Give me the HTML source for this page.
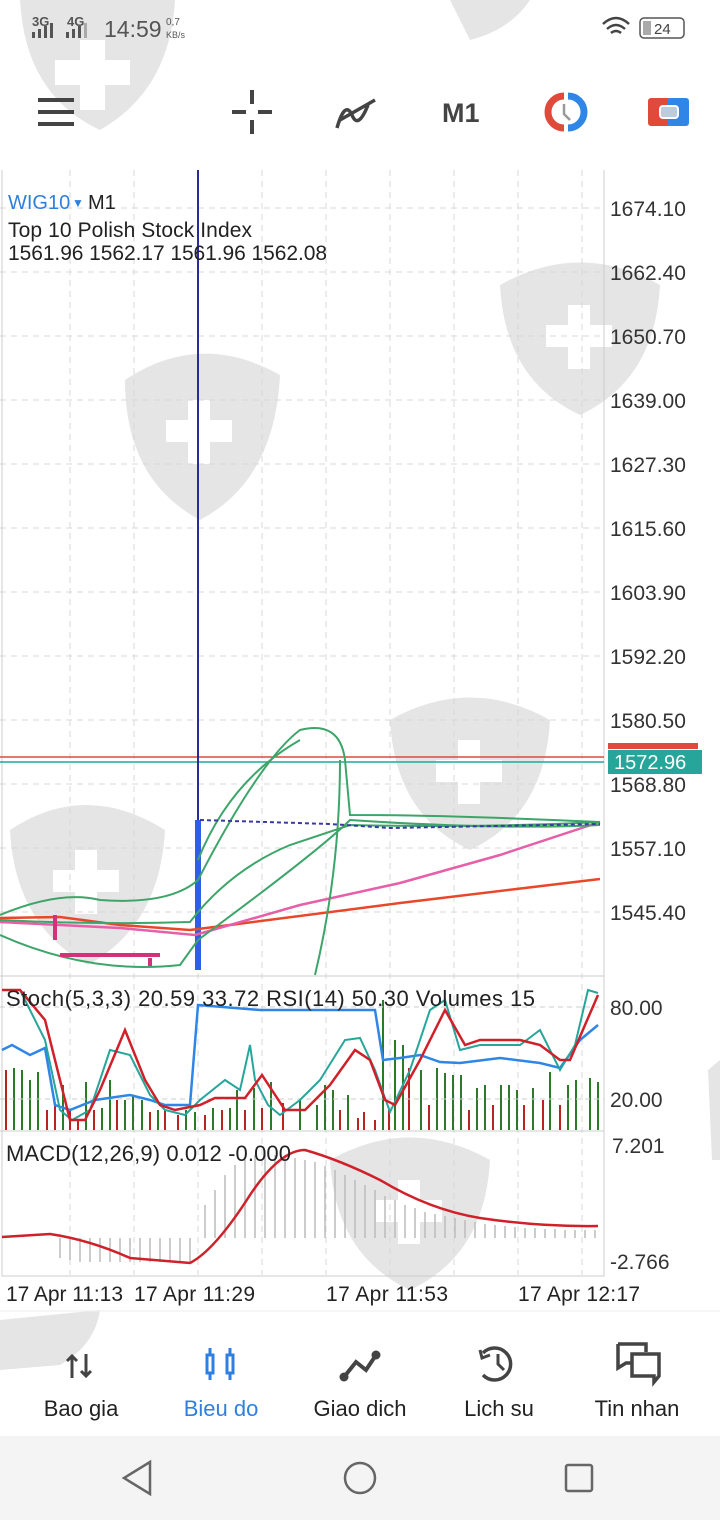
<!DOCTYPE html>
<html><head><meta charset="utf-8"><style>
body{margin:0;width:720px;height:1520px;background:#fff;position:relative;overflow:hidden;font-family:"Liberation Sans",sans-serif;}
.abs{position:absolute}
</style></head><body>
<svg class="abs" style="left:0;top:0" width="720" height="1520" viewBox="0 0 720 1520">
<g fill="#e5e5e5">
<path d="M20 0 L175 0 Q170 90 100 130 Q25 95 20 0Z"/>
<path d="M125 380 Q200 330 280 375 Q275 480 200 520 Q125 480 125 380Z"/>
<path d="M500 285 Q580 240 660 285 Q655 380 580 415 Q505 380 500 285Z"/>
<path d="M390 720 Q470 675 550 720 Q545 815 470 850 Q395 815 390 720Z"/>
<path d="M10 830 Q85 780 165 830 Q160 925 88 965 Q15 925 10 830Z"/>
<path d="M330 1160 Q410 1115 490 1160 Q485 1255 410 1290 Q335 1255 330 1160Z"/>
<path d="M0 1320 L100 1310 Q95 1345 60 1365 L0 1370Z"/>
<path d="M640 1480 L720 1460 L720 1520 L650 1520Z"/>
<path d="M708 1070 L720 1060 L720 1160 L712 1160Z"/>
<path d="M450 0 L530 0 Q510 30 470 40Z"/>
</g>
<g fill="#fff">
<path d="M80 40h25v20h25v25h-25v25h-25v-25h-25v-25h25z"/>
<path d="M188 400h22v20h22v22h-22v22h-22v-22h-22v-22h22z"/>
<path d="M568 305h22v20h22v22h-22v22h-22v-22h-22v-22h22z"/>
<path d="M458 740h22v20h22v22h-22v22h-22v-22h-22v-22h22z"/>
<path d="M75 850h22v20h22v22h-22v22h-22v-22h-22v-22h22z"/>
<path d="M398 1180h22v20h22v22h-22v22h-22v-22h-22v-22h22z"/>
</g>
<text x="32" y="26" font-size="13" fill="#555" font-weight="bold">3G</text>
<text x="67" y="26" font-size="13" fill="#555" font-weight="bold">4G</text>
<g fill="#555"><rect x="32" y="32" width="3" height="6"/><rect x="38" y="29" width="3" height="9"/><rect x="44" y="26" width="3" height="12"/><rect x="50" y="23" width="3" height="15"/><rect x="66" y="32" width="3" height="6"/><rect x="72" y="29" width="3" height="9"/><rect x="78" y="26" width="3" height="12"/><rect x="84" y="23" width="3" height="15" fill="#aaa"/></g>
<text x="104" y="37" font-size="23" fill="#555">14:59</text>
<text x="166" y="25" font-size="10" fill="#555">0,7</text>
<text x="166" y="38" font-size="9" fill="#555">KB/s</text>
<path d="M603 24 Q616 12 629 24 M607 29 Q616 21 625 29 M611 33 Q616 29 621 33" stroke="#444" stroke-width="2.5" fill="none"/>
<rect x="640" y="18" width="44" height="20" rx="4" fill="none" stroke="#555" stroke-width="1.5"/>
<rect x="643" y="21" width="8" height="14" fill="#aaa"/>
<text x="654" y="34" font-size="15" fill="#444">24</text>
<g fill="#444"><rect x="38" y="98" width="36" height="4"/><rect x="38" y="110" width="36" height="4"/><rect x="38" y="122" width="36" height="4"/></g>
<g stroke="#444" stroke-width="4"><path d="M252 90v14M252 120v14M232 112h14M258 112h14"/></g>
<path d="M337 128 Q345 100 352 115 Q358 130 368 105 M340 120 L375 100" stroke="#444" stroke-width="3.5" fill="none"/>
<text x="442" y="122" font-size="27" font-weight="bold" fill="#444">M1</text>
<path d="M564 96 A16 16 0 0 0 564 128" stroke="#e04a3a" stroke-width="7" fill="none"/>
<path d="M568 96 A16 16 0 0 1 568 128" stroke="#2f86e6" stroke-width="7" fill="none"/>
<path d="M564 104 L564 114 L570 120" stroke="#999" stroke-width="2.5" fill="none"/>
<rect x="648" y="98" width="23" height="28" rx="3" fill="#e04a3a"/>
<rect x="667" y="98" width="22" height="28" rx="3" fill="#2f86e6"/>
<rect x="660" y="106" width="18" height="12" rx="3" fill="#bcd" stroke="#fff" stroke-width="2"/>
<g stroke="#d8d8d8" stroke-dasharray="6,5" stroke-width="1">
<path d="M70 170V1275M134 170V1275M198 170V1275M262 170V1275M326 170V1275M390 170V1275M454 170V1275M518 170V1275M582 170V1275"/>
<path d="M0 208H604M0 272H604M0 336H604M0 400H604M0 464H604M0 528H604M0 592H604M0 656H604M0 720H604M0 784H604M0 848H604M0 912H604"/>
</g>
<path d="M2 170V1276H604V170" stroke="#ccc" fill="none"/>
<line x1="0" y1="976" x2="604" y2="976" stroke="#ccc"/>
<line x1="0" y1="1131" x2="604" y2="1131" stroke="#ccc"/>
<g font-size="21" fill="#333">
<text x="610" y="216">1674.10</text><text x="610" y="280">1662.40</text><text x="610" y="344">1650.70</text><text x="610" y="408">1639.00</text><text x="610" y="472">1627.30</text><text x="610" y="536">1615.60</text><text x="610" y="600">1603.90</text><text x="610" y="664">1592.20</text><text x="610" y="728">1580.50</text><text x="610" y="792">1568.80</text><text x="610" y="856">1557.10</text><text x="610" y="920">1545.40</text>
<text x="610" y="1015">80.00</text><text x="610" y="1107">20.00</text><text x="612" y="1153">7.201</text><text x="610" y="1269">-2.766</text>
</g>
<rect x="608" y="750" width="94" height="24" fill="#26a69a"/>
<rect x="608" y="743" width="90" height="6" fill="#e04a3a"/>
<text x="614" y="769" font-size="20" fill="#fff">1572.96</text>
<line x1="0" y1="757" x2="604" y2="757" stroke="#e04a3a" stroke-width="1.5"/>
<line x1="0" y1="762" x2="604" y2="762" stroke="#26a69a" stroke-width="1.5"/>
<line x1="198" y1="170" x2="198" y2="970" stroke="#2a2a9a" stroke-width="2"/>
<rect x="195" y="820" width="6" height="150" fill="#2f5ee6"/>
<path d="M0 918 L60 917 L120 925 L190 930 L230 925 L400 903 L600 879" stroke="#e8472a" stroke-width="2.5" fill="none"/>
<path d="M0 922 L120 928 L195 935 L300 905 L400 883 L500 855 L600 822" stroke="#e65fa8" stroke-width="2.5" fill="none"/>
<path d="M0 915 Q60 890 100 900 Q170 905 198 880 Q260 760 300 730 Q340 720 345 760 L350 815 Q450 815 600 822" stroke="#3da56a" stroke-width="2" fill="none"/>
<path d="M0 935 Q90 975 180 965 L198 940 Q320 850 350 820 Q500 830 600 825" stroke="#3da56a" stroke-width="2" fill="none"/>
<path d="M0 920 Q100 925 190 922 Q230 870 290 845 L350 825 Q480 828 600 822" stroke="#3da56a" stroke-width="2" fill="none"/>
<path d="M198 860 Q230 780 300 740 M340 760 Q340 870 315 975" stroke="#3da56a" stroke-width="2" fill="none"/>
<path d="M200 820 L330 824 L390 828 L600 824" stroke="#3a3aa0" stroke-width="2" stroke-dasharray="4,3" fill="none"/>
<path d="M55 915v25 M60 955h100 M150 958v8" stroke="#d2327a" stroke-width="4"/>
<text x="8" y="209" font-size="20" fill="#2f7fe0">WIG10</text>
<text x="72" y="207" font-size="12" fill="#2f7fe0">▼</text>
<text x="88" y="209" font-size="20" fill="#222">M1</text>
<text x="8" y="237" font-size="21" fill="#222" textLength="244">Top 10 Polish Stock Index</text>
<text x="8" y="260" font-size="21" fill="#222" textLength="319">1561.96 1562.17 1561.96 1562.08</text>
<g stroke-width="2">
<path stroke="#b22" d="M6 1070V1130M47 1110V1130M55 1105V1130M70 1110V1130M78 1120V1130M94 1110V1130M117 1100V1130M150 1112V1130M165 1110V1130M178 1115V1130M205 1115V1130M222 1110V1130M245 1110V1130M262 1108V1130M283 1103V1130M340 1110V1130M358 1118V1130M364 1112V1130M375 1120V1130M389 1110V1130M409 1068V1130M429 1105V1130M469 1110V1130M493 1105V1130M524 1105V1130M543 1100V1130M560 1105V1130"/>
<path stroke="#2a7a2a" d="M14 1068V1130M22 1070V1130M30 1080V1130M38 1072V1130M63 1085V1130M86 1082V1130M102 1108V1130M110 1080V1130M125 1100V1130M133 1095V1130M142 1100V1130M158 1110V1130M186 1110V1130M195 1112V1130M213 1108V1130M230 1108V1130M237 1090V1130M254 1088V1130M271 1082V1130M300 1100V1130M317 1105V1130M325 1085V1130M333 1090V1130M348 1095V1130M383 1000V1130M395 1040V1130M403 1045V1130M421 1070V1130M437 1068V1130M445 1073V1130M453 1075V1130M461 1075V1130M477 1088V1130M485 1085V1130M501 1085V1130M509 1085V1130M517 1090V1130M533 1088V1130M550 1072V1130M568 1085V1130M576 1080V1130M590 1078V1130M598 1082V1130"/>
</g>
<g stroke="#ccc" stroke-dasharray="5,4"><path d="M0 1007H604M0 1099H604"/></g>
<polyline fill="none" stroke="#2f86e6" stroke-width="2.5" points="2,1050 12,1045 30,1055 45,1048 55,1105 70,1110 95,1100 130,1095 150,1100 165,1105 190,1105 198,1005 260,1010 375,1010 383,1060 400,1058 420,1055 440,1062 460,1063 500,1058 540,1063 560,1068 580,1040 598,1025"/>
<polyline fill="none" stroke="#26a69a" stroke-width="2" points="2,990 20,990 45,1040 60,1110 72,1120 90,1110 110,1050 130,1055 150,1095 165,1110 185,1115 200,1100 225,1080 240,1090 250,1045 255,1080 268,1105 280,1115 300,1100 320,1080 345,1040 360,1038 375,1070 390,1112 410,1070 430,1010 445,1000 460,1050 480,1045 500,1045 520,1045 540,1030 560,1070 575,1045 588,990 598,993"/>
<polyline fill="none" stroke="#d0202a" stroke-width="2.5" points="2,990 20,990 45,1020 70,1120 85,1120 100,1090 125,1030 145,1080 160,1105 175,1110 200,1105 215,1098 245,1098 262,1075 285,1110 305,1110 330,1085 355,1050 370,1060 385,1100 395,1105 420,1060 445,1010 465,1045 480,1040 520,1040 540,1045 560,1060 570,1060 585,1025 598,995"/>
<text x="6" y="1006" font-size="22" fill="#222" textLength="529">Stoch(5,3,3) 20.59 33.72 RSI(14) 50.30 Volumes 15</text>
<g stroke="#bbb" stroke-width="1.5">
<path d="M60 1238V1258M70 1238V1260M80 1238V1262M90 1238V1262M100 1238V1262M110 1238V1262M120 1238V1262M130 1238V1262M140 1238V1262M150 1238V1262M160 1238V1262M170 1238V1262M180 1238V1262M190 1238V1262"/>
<path d="M205 1238V1205M215 1238V1190M225 1238V1175M235 1238V1165M245 1238V1160M255 1238V1155M265 1238V1155M275 1238V1155M285 1238V1155M295 1238V1158M305 1238V1160M315 1238V1162M325 1238V1166M335 1238V1170M345 1238V1175M355 1238V1180M365 1238V1185M375 1238V1190M385 1238V1196M395 1238V1200M405 1238V1205M415 1238V1208M425 1238V1212M435 1238V1214M445 1238V1216M455 1238V1218M465 1238V1220M475 1238V1222M485 1238V1224M495 1238V1225M505 1238V1226M515 1238V1227M525 1238V1228M535 1238V1228M545 1238V1229M555 1238V1229M565 1238V1230M575 1238V1230M585 1238V1230M595 1238V1230"/>
</g>
<path d="M2 1237 L50 1234 Q90 1240 130 1258 L190 1263 Q215 1250 250 1195 Q280 1150 305 1150 Q340 1160 380 1180 Q430 1210 480 1218 Q540 1227 598 1226" stroke="#d0202a" stroke-width="2.5" fill="none"/>
<text x="6" y="1161" font-size="22" fill="#222" textLength="285">MACD(12,26,9) 0.012 -0.000</text>
<g font-size="21" fill="#222"><text x="6" y="1301" textLength="117">17 Apr 11:13</text><text x="134" y="1301" textLength="121">17 Apr 11:29</text><text x="326" y="1301" textLength="122">17 Apr 11:53</text><text x="518" y="1301" textLength="122">17 Apr 12:17</text></g>
<line x1="0" y1="1311" x2="720" y2="1311" stroke="#eee"/>
<path d="M72 1378V1356M67 1361l5-5 5 5 M86 1354V1376M81 1371l5 5 5-5" stroke="#444" stroke-width="3" fill="none"/>
<g stroke="#2f7fe0" stroke-width="3" fill="none"><rect x="207" y="1355" width="6" height="18"/><rect x="227" y="1355" width="6" height="18"/><path d="M210 1348v7M210 1373v7M230 1348v7M230 1373v7"/></g>
<path d="M344 1377 L356 1362 L366 1370 L376 1355" stroke="#444" stroke-width="4" fill="none"/>
<circle cx="344" cy="1377" r="4.5" fill="#444"/><circle cx="376" cy="1355" r="4.5" fill="#444"/>
<path d="M483 1353 A16 16 0 1 1 483 1375" stroke="#444" stroke-width="3.5" fill="none"/>
<path d="M480 1350l2 8 8-3" stroke="#444" stroke-width="3" fill="none"/>
<path d="M498 1354v10l6 6" stroke="#444" stroke-width="3" fill="none"/>
<path d="M618 1344h28v8 M618 1344v24l8-5h6" stroke="#444" stroke-width="3.5" fill="none"/>
<path d="M632 1354h27v22l-5 6v-6h-22z" stroke="#444" stroke-width="3.5" fill="none"/>
<g font-size="22" fill="#222" text-anchor="middle"><text x="81" y="1416">Bao gia</text><text x="221" y="1416" fill="#2f7fe0">Bieu do</text><text x="360" y="1416">Giao dich</text><text x="499" y="1416">Lich su</text><text x="637" y="1416">Tin nhan</text></g>
<rect x="0" y="1436" width="720" height="84" fill="#f4f4f4"/>
<path d="M150 1462 L124 1478 L150 1494Z" stroke="#666" stroke-width="2.5" fill="none"/>
<circle cx="360" cy="1478" r="15" stroke="#666" stroke-width="2.5" fill="none"/>
<rect x="566" y="1465" width="26" height="26" rx="2" stroke="#666" stroke-width="2.5" fill="none"/>
</svg>
</body></html>
